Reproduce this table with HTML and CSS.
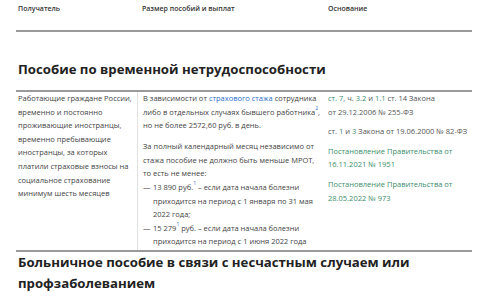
FILE: index.html
```html
<!DOCTYPE html>
<html lang="ru">
<head>
<meta charset="utf-8">
<link rel="stylesheet" href="styles.css">
</head>
<body>
<div class="page">
  <div class="thead">
    <div class="th c1">Получатель</div>
    <div class="th c2">Размер пособий и выплат</div>
    <div class="th c3">Основание</div>
  </div>
  <h2 class="title t1">Пособие по временной нетрудоспособности</h2>
  <div class="row">
    <div class="cell c1">Работающие граждане России, временно и постоянно проживающие иностранцы, временно пребывающие иностранцы, за которых платили страховые взносы на социальное страхование минимум шесть месяцев</div>
    <div class="cell c2 mid">
      <p>В зависимости от <a class="blue">страхового стажа</a> сотрудника либо в отдельных случаях бывшего работника<sup class="blue">2</sup>, но не более 2572,60 руб. в день.</p>
      <p>За полный календарный месяц независимо от стажа пособие не должно быть меньше МРОТ, то есть не менее:</p>
      <ul class="dash">
        <li><span class="d">—</span><span>13 890 руб.<sup class="blue sm">1</sup> – если дата начала болезни приходится на период с 1 января по 31 мая 2022 года;</span></li>
        <li><span class="d">—</span><span>15 279<sup class="blue sm">1</sup> руб. – если дата начала болезни приходится на период с 1 июня 2022 года</span></li>
      </ul>
    </div>
    <div class="cell c3 right">
      <p><a class="green">ст. 7</a>, ч. <a class="green">3.2</a> и <a class="green">1.1</a> ст. 14 Закона<br>от 29.12.2006 № 255-ФЗ</p>
      <p>ст. <a class="green">1</a> и <a class="green">3</a> Закона от 19.06.2000 № 82-ФЗ</p>
      <p><a class="green">Постановление Правительства от 16.11.2021 № 1951</a></p>
      <p><a class="green">Постановление Правительства от 28.05.2022 № 973</a></p>
    </div>
  </div>
  <h2 class="title t2">Больничное пособие в связи с несчастным случаем или профзаболеванием</h2>
</div>
</body>
</html>
```
FILE: styles.css
```css
* { box-sizing: border-box; }
html, body { margin: 0; padding: 0; background: #fff; }
body { font-family: "Open Sans", "Liberation Sans", sans-serif; color: #333; }
.page { width: 456px; margin-left: 16px; }
.thead, .row { display: grid; grid-template-columns: 121px 186px 1fr; }
.thead { height: 32px; border-bottom: 2px solid #9a9a9a; padding-top: 4px; }
.th { font-size: 7px; font-weight: 600; color: #333; line-height: 10px; }
.c1 { padding-left: 2px; }
.c2 { padding-left: 5px; }
.c3 { padding-left: 5px; padding-right: 2px; }
.title { margin: 0; font-size: 13.2px; font-weight: 700; color: #222; }
.t1 { padding: 28px 0 0 2px; height: 60px; line-height: 18px; border-bottom: 2px solid #9a9a9a; }
.row { border-bottom: 2px solid #9a9a9a; padding: 0; font-size: 7.5px; line-height: 13.6px; color: #444; }
.row .c1 { padding-right: 4px; }
.mid { border-left: 1px solid #e2e2e2; padding-bottom: 1px; }
.row p { margin: 0; }
.mid p + p { margin-top: 7.5px; }
.right p + p { margin-top: 6px; }
.right { color: #555; }
.blue { color: #2a6fc9; }
.green { color: #3b8d6b; }
sup { font-size: 5px; line-height: 0; vertical-align: 5px; }
.dash { list-style: none; margin: 0; padding: 0; }
.dash li { display: flex; }
.dash .d { width: 10px; flex: none; }
.t2 { padding: 0 0 0 2px; line-height: 21px; }
```
